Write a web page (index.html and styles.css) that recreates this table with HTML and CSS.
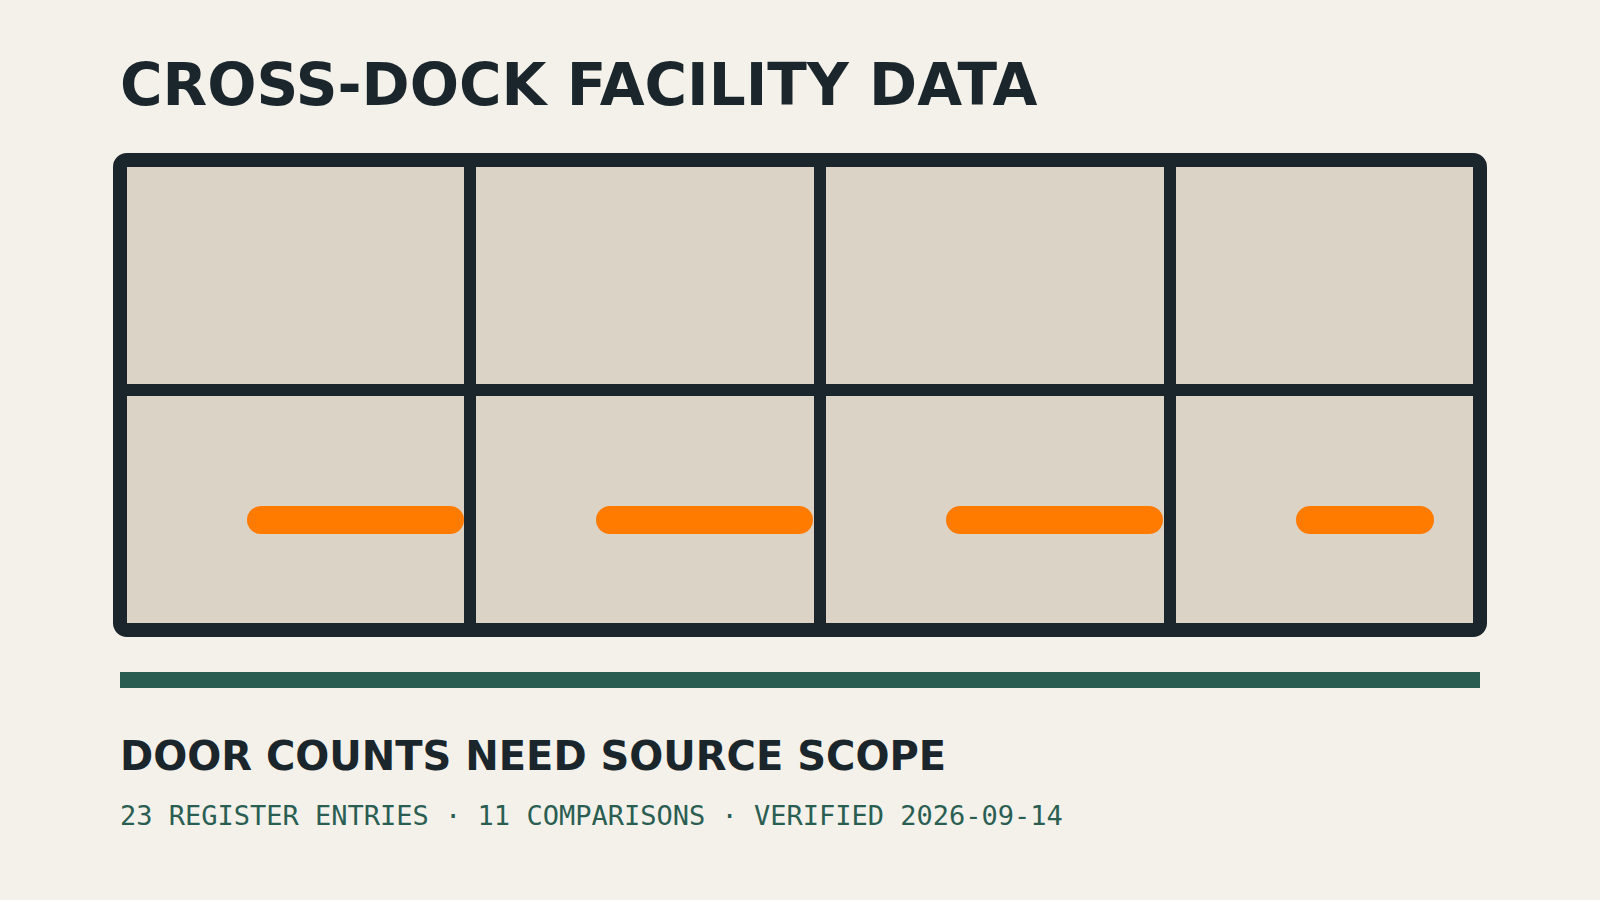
FILE: index.html
```html
<!DOCTYPE html>
<html lang="en">
<head>
<meta charset="utf-8">
<title>Cross-Dock Facility Data</title>
<link rel="stylesheet" href="styles.css">
</head>
<body>
<main class="page">
  <h1 class="title">CROSS-DOCK FACILITY DATA</h1>
  <section class="panel">
    <div class="grid">
      <div class="cell"></div>
      <div class="cell"></div>
      <div class="cell"></div>
      <div class="cell"></div>
      <div class="cell lower"><span class="bar" style="width:217px"></span></div>
      <div class="cell lower"><span class="bar" style="width:217px"></span></div>
      <div class="cell lower"><span class="bar" style="width:217px"></span></div>
      <div class="cell lower"><span class="bar" style="width:138px"></span></div>
    </div>
  </section>
  <div class="rule"></div>
  <h2 class="subtitle">DOOR COUNTS NEED SOURCE SCOPE</h2>
  <p class="meta">23 REGISTER ENTRIES · 11 COMPARISONS · VERIFIED 2026-09-14</p>
</main>
</body>
</html>
```

FILE: styles.css
```css
html, body {
  margin: 0;
  padding: 0;
  background: #f4f1ea;
}
body {
  width: 1600px;
  height: 900px;
  overflow: hidden;
  font-family: "DejaVu Sans", "Liberation Sans", sans-serif;
  color: #1a262b;
}
.page {
  display: flex;
  flex-direction: column;
  padding: 56px 120px 0 120px;
}
.title {
  margin: 0;
  font-size: 58px;
  line-height: 58px;
  font-weight: 700;
  color: #1a262b;
  white-space: nowrap;
}
.panel {
  margin: 39px -7px 0 -7px;
  border: 14px solid #1a262b;
  border-radius: 14px;
  background: #1a262b;
}
.grid {
  display: grid;
  grid-template-columns: 337px 338px 338px 297px;
  grid-template-rows: 217px 227px;
  gap: 12px;
  background: #1a262b;
}
.cell {
  background: #dbd3c5;
}
.cell.lower {
  display: flex;
  align-items: flex-start;
  padding: 110px 0 0 120px;
}
.bar {
  display: block;
  height: 28px;
  border-radius: 14px;
  background: #ff7b00;
}
.rule {
  margin-top: 35px;
  height: 16px;
  background: #295d52;
}
.subtitle {
  margin: 48px 0 0 0;
  font-size: 40px;
  line-height: 40px;
  font-weight: 700;
  color: #1a262b;
  white-space: nowrap;
}
.meta {
  margin: 26px 0 0 0;
  font-family: "DejaVu Sans Mono", "Liberation Mono", monospace;
  font-size: 27px;
  line-height: 27px;
  color: #2a5e52;
  white-space: nowrap;
}
```
